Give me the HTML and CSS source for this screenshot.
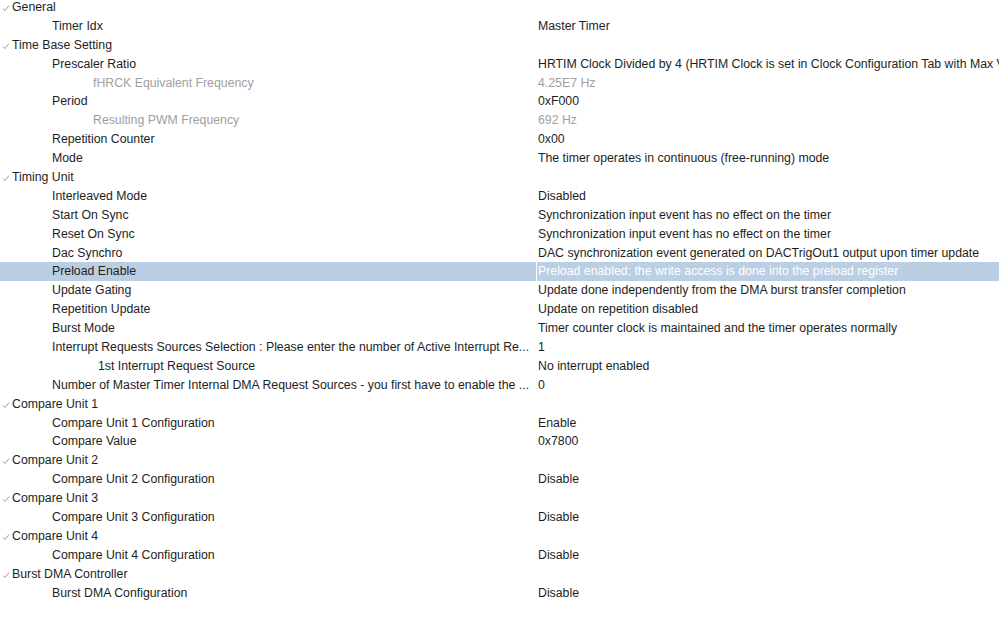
FILE: index.html
```
<html>
    <head>
        <link rel="stylesheet" href="styles.css">
    </head>
    <body>
        <div id="tree"></div>

        <script>
            // level 0 = group, 1 = param, 2 = sub param
            var rows = [
                [0, "General", ""],
                [1, "Timer Idx", "Master Timer"],
                [0, "Time Base Setting", ""],
                [1, "Prescaler Ratio", "HRTIM Clock Divided by 4 (HRTIM Clock is set in Clock Configuration Tab with Max Value 170 MHz)"],
                [2, "fHRCK Equivalent Frequency", "4.25E7 Hz", "grey"],
                [1, "Period", "0xF000"],
                [2, "Resulting PWM Frequency", "692 Hz", "grey"],
                [1, "Repetition Counter", "0x00"],
                [1, "Mode", "The timer operates in continuous (free-running) mode"],
                [0, "Timing Unit", ""],
                [1, "Interleaved Mode", "Disabled"],
                [1, "Start On Sync", "Synchronization input event has no effect on the timer"],
                [1, "Reset On Sync", "Synchronization input event has no effect on the timer"],
                [1, "Dac Synchro", "DAC synchronization event generated on DACTrigOut1 output upon timer update"],
                [1, "Preload Enable", "Preload enabled: the write access is done into the preload register", "sel"],
                [1, "Update Gating", "Update done independently from the DMA burst transfer completion"],
                [1, "Repetition Update", "Update on repetition disabled"],
                [1, "Burst Mode", "Timer counter clock is maintained and the timer operates normally"],
                [1, "Interrupt Requests Sources Selection : Please enter the number of Active Interrupt Re...", "1"],
                [2, "1st Interrupt Request Source", "No interrupt enabled", "deep"],
                [1, "Number of Master Timer Internal DMA Request Sources  - you first have to enable the ...", "0"],
                [0, "Compare Unit 1", ""],
                [1, "Compare Unit 1 Configuration", "Enable"],
                [1, "Compare Value", "0x7800"],
                [0, "Compare Unit 2", ""],
                [1, "Compare Unit 2 Configuration", "Disable"],
                [0, "Compare Unit 3", ""],
                [1, "Compare Unit 3 Configuration", "Disable"],
                [0, "Compare Unit 4", ""],
                [1, "Compare Unit 4 Configuration", "Disable"],
                [0, "Burst DMA Controller", ""],
                [1, "Burst DMA Configuration", "Disable"]
            ];
            var tree = document.getElementById('tree');
            var check = '<svg class="chk" width="8" height="8" viewBox="0 0 8 8"><path d="M1 4.5 L3 6.5 L7 1.5" fill="none" stroke="#9a9a9a" stroke-width="1"/></svg>';
            for (var i = 0; i < rows.length; ++i) {
                var r = rows[i];
                var row = document.createElement('div');
                row.className = 'row';
                if (r[3]) row.className += ' ' + r[3];
                var label = document.createElement('div');
                label.className = 'name lvl' + r[0];
                if (r[0] === 0) {
                    label.innerHTML = check + '<span></span>';
                    label.lastChild.textContent = r[1];
                } else {
                    label.textContent = r[1];
                }
                var val = document.createElement('div');
                val.className = 'val';
                val.textContent = r[2];
                row.appendChild(label);
                row.appendChild(val);
                tree.appendChild(row);
            }
        </script>
    </body>
</html>
```

FILE: styles.css
```
body {
    margin: 0;
    background: white;
    font-family: "Liberation Sans", Arial, sans-serif;
    font-size: 12.3px;
    color: #1e1e1e;
    overflow: hidden;
}
#tree {
    margin-top: -2px;
}
.row {
    display: grid;
    grid-template-columns: 536px 1fr;
    column-gap: 1px;
    height: 18.9px;
    line-height: 18.9px;
    white-space: nowrap;
}
.name, .val {
    overflow: hidden;
}
.val {
    padding-left: 1px;
}
.lvl0 {
    display: flex;
    align-items: center;
    padding-left: 2px;
}
.lvl1 {
    padding-left: 52px;
}
.lvl2 {
    padding-left: 93px;
}
.chk {
    margin-right: 2px;
    margin-top: 1px;
}
.grey .name, .grey .val {
    color: #a0a0a0;
}
.deep .name {
    padding-left: 98px;
}
.sel .name, .sel .val {
    background-color: #bacfe4;
}
.sel .val {
    color: white;
}
```
